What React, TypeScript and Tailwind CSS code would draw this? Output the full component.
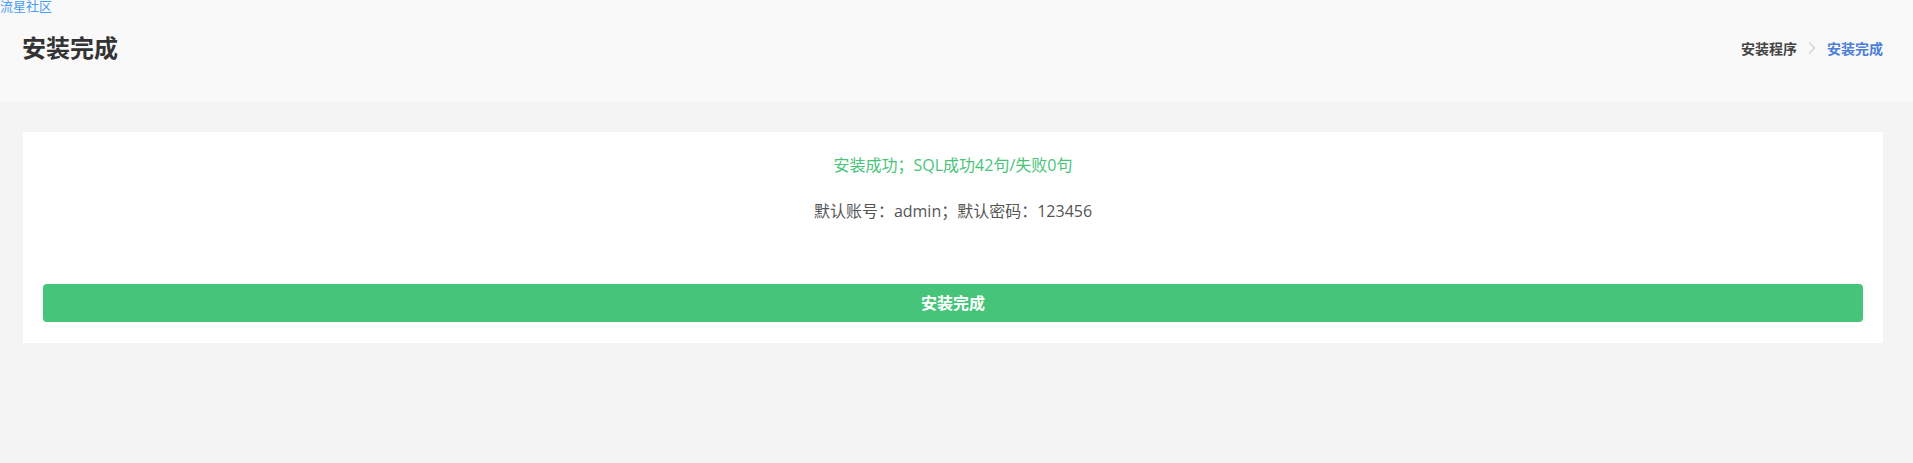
import { ChevronRight } from "lucide-react"

const font = { fontFamily: '"Open Sans", "Noto Sans CJK SC", sans-serif' }

export default function App() {
  return (
    <div className="min-h-screen bg-[#f4f4f4]" style={font}>
      <div className="h-[102px] bg-[#f9f9f9]">
        <a href="#" className="block text-[13px] leading-[13px] text-[#4a9cf0]">
          流星社区
        </a>
        <div className="flex items-center justify-between pl-[22px] pr-[30px] pt-[21px]">
          <h1 className="text-[24px] font-bold leading-[28px] text-[#333]">安装完成</h1>
          <div className="flex items-center text-[14px] font-semibold">
            <span className="text-[#444]">安装程序</span>
            <ChevronRight className="mx-[5px] h-5 w-5 text-[#cfd4db]" strokeWidth={1.5} />
            <span className="text-[#4d7ed9]">安装完成</span>
          </div>
        </div>
      </div>

      <div className="ml-[23px] mr-[30px] mt-[30px] bg-white px-[20px] pt-[22px] pb-[21px]">
        <p className="text-center text-[16px] leading-[22px] text-[#47c479]">
          安装成功；SQL成功42句/失败0句
        </p>
        <p className="mt-[24px] text-center text-[16px] leading-[22px] text-[#555]">
          默认账号：admin；默认密码：123456
        </p>
        <button className="mt-[62px] h-[38px] w-full rounded-[4px] bg-[#46c47a] text-[16px] font-bold text-white">
          安装完成
        </button>
      </div>
    </div>
  )
}
